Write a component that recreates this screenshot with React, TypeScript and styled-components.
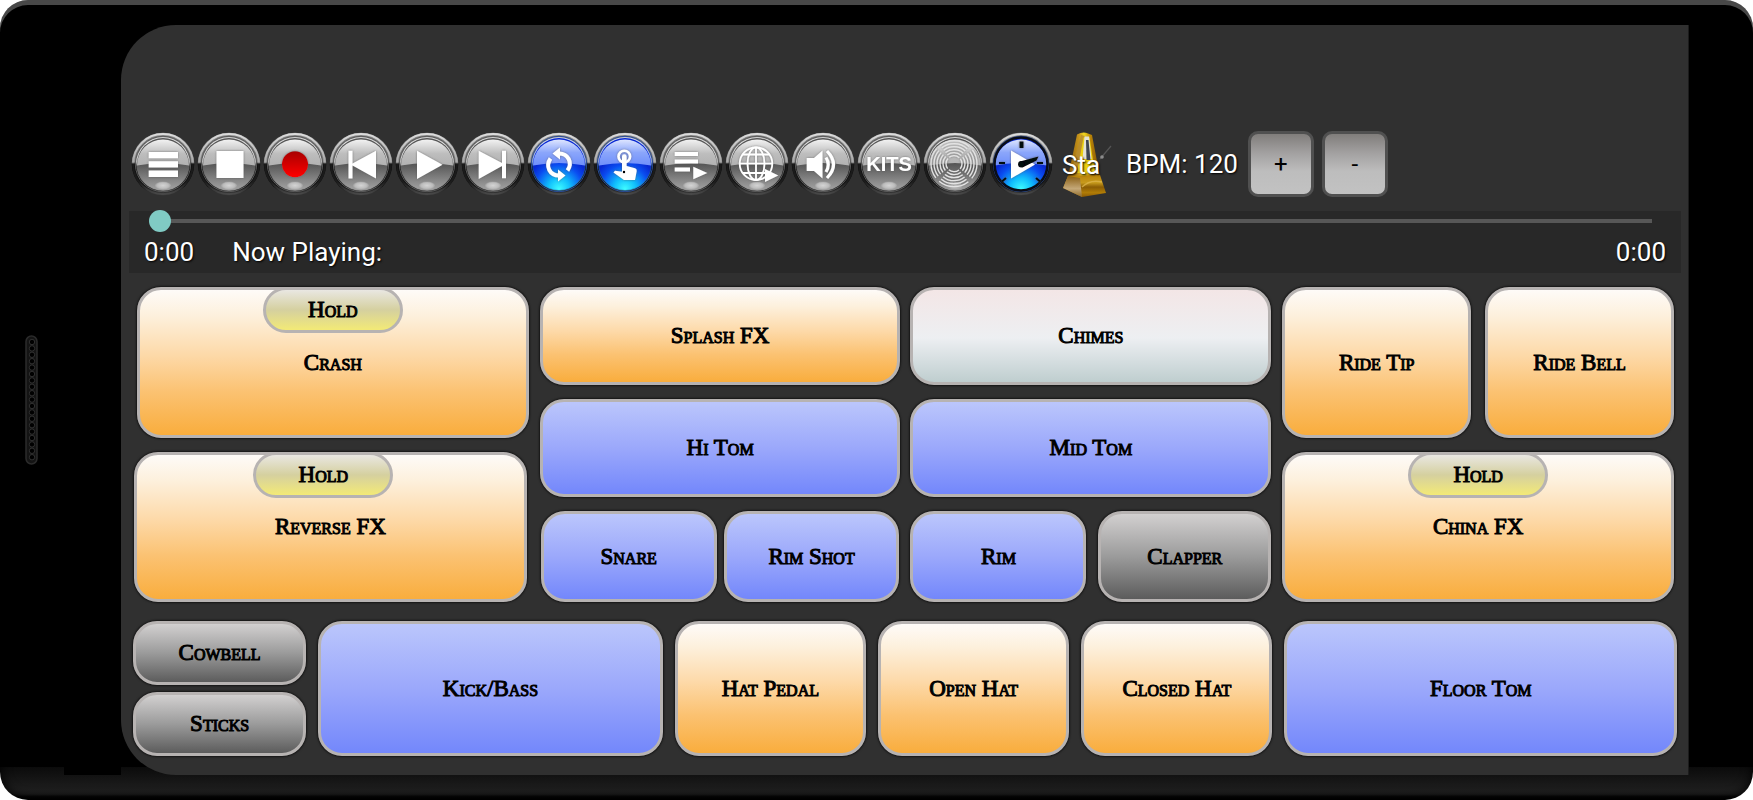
import React from "react";
import styled, { createGlobalStyle, css } from "styled-components";

const GlobalStyle = createGlobalStyle`
  *, *::before, *::after { box-sizing: border-box; }
  body { margin: 0; background: #fff; font-family: Roboto, sans-serif; }
  button { font: inherit; color: inherit; padding: 0; border: 0; background: none; cursor: pointer; }
`;

/* ---------- device frame ---------- */

const Device = styled.div`
  display: flex;
  min-height: 100vh;
  padding: 25px 0;
  border-radius: 28px;
  overflow: hidden;
  background:
    linear-gradient(#000, #000) 64px calc(100% - 25px) / 57px 8px no-repeat,
    linear-gradient(#0b0b0b, #1e1e1e 70%, #1b1b1b 82%, #060606 90%, #000) 0 100% / 100% 33px no-repeat,
    #000;
  box-shadow: inset 0 5px 0 #484848, inset 0 0 12px #000;
`;

const Bezel = styled.div<{ $width: number }>`
  flex: none;
  width: ${(p) => p.$width}px;
  display: flex;
  align-items: center;
  padding-left: 25px;
`;

const Screen = styled.main`
  flex: 1;
  min-width: 0;
  display: flex;
  flex-direction: column;
  gap: 14px;
  padding: 105px 0 18px;
  background: #303030;
  border-right: 1px solid #1c1c1c;
  border-radius: 55px 0 0 55px;
`;

/* ---------- toolbar ---------- */

const Toolbar = styled.div`
  display: flex;
  align-items: center;
  gap: 2px;
  height: 67px;
  padding-left: 10px;
`;

const OrbButton = styled.button`
  flex: none;
  width: 64px;
  height: 64px;
  border-radius: 50%;
  svg { display: block; }
`;

const MetronomeButton = styled.button`
  position: relative;
  flex: none;
  width: 64px;
  height: 66px;
  svg { display: block; }
`;

const label = css`
  font-size: 26px;
  line-height: 30px;
  color: #fff;
  text-shadow: 1px 1px 2px #000;
  white-space: nowrap;
`;

const MetronomeLabel = styled.span`
  ${label}
  position: absolute;
  left: 7px;
  top: 19px;
`;

const Bpm = styled.output`
  ${label}
  margin: 0 8px 0 5px;
`;

const StepButton = styled.button`
  flex: none;
  width: 66px;
  height: 66px;
  margin-right: 6px;
  border: 3px solid #505050;
  border-radius: 10px;
  background: linear-gradient(#807d7b, #a3a1a1 32%, #bdbdbd 62%, #c2c2c2);
  color: #000;
  font-size: 24px;
  line-height: 30px;
`;

/* ---------- player ---------- */

const Player = styled.section`
  margin: 0 7px 0 8px;
  padding-bottom: 6px;
  background: #282828;
`;

const Seek = styled.input`
  display: block;
  width: calc(100% - 38px);
  height: 20px;
  margin: 0 18px 6px 20px;
  appearance: none;
  background: linear-gradient(#575757, #575757) center / calc(100% - 22px) 4px no-repeat;
  &::-webkit-slider-thumb {
    appearance: none;
    width: 22px;
    height: 22px;
    border-radius: 50%;
    background: #80cbc4;
  }
`;

const TrackInfo = styled.div`
  display: flex;
  padding: 0 15px 0 15px;
`;

const Time = styled.span`
  ${label}
`;

const NowPlaying = styled.span`
  ${label}
  flex: 1;
  padding-left: 38px;
`;

/* ---------- pads ---------- */

type Tone = "cymbal" | "drum" | "metal" | "chimes";

const tones: Record<Tone, string> = {
  cymbal: "linear-gradient(#fefbf8, #fdf0dc 18%, #fdd9a8 45%, #fbc272 70%, #f9ad3d)",
  drum: "linear-gradient(#bbc6fc, #9ba8fb 50%, #7387fb)",
  metal: "linear-gradient(#d2d0d0, #9b9b9b 50%, #5c5c5c)",
  chimes: "linear-gradient(#f3e6e6, #edeff2 52%, #bfcecf)",
};

const PadCell = styled.div<{ $height: number; $start?: number; $end?: number }>`
  position: relative;
  display: flex;
  justify-content: center;
  min-width: 0;
  height: ${(p) => p.$height}px;
  margin-left: ${(p) => p.$start ?? 0}px;
  margin-right: ${(p) => p.$end ?? 0}px;
`;

const padFont = css`
  font-family: "Liberation Serif", serif;
  font-size: 23px;
  line-height: 28px;
  font-weight: 400;
  -webkit-text-stroke: 1px #000;
  font-variant-caps: small-caps;
  color: #000;
  white-space: nowrap;
`;

const PadButton = styled.button<{ $tone: Tone }>`
  && {
    ${padFont}
    flex: 1;
    min-width: 0;
    border: 3px solid #b7b3b2;
    border-radius: 24px;
    background: ${(p) => tones[p.$tone]};
    box-shadow: 0 0 2px 1px rgba(0, 0, 0, 0.6);
  }
`;

const HoldButton = styled.button<{ $shift: number }>`
  && {
    ${padFont}
    position: absolute;
    top: 0;
    left: calc(50% - 70px - ${(p) => p.$shift}px);
    width: 140px;
    height: 46px;
    border: 3px solid #b7b3b2;
    border-radius: 23px;
    background: linear-gradient(#e9e7e2, #d5d09f 50%, #f3ea76);
  }
`;

const UpperKit = styled.div`
  display: grid;
  grid-template-columns: 395fr 732fr 392fr;
  gap: 11px;
  padding: 0 14px 0 13px;
`;

const Stack = styled.div<{ $gap: number }>`
  display: flex;
  flex-direction: column;
  gap: ${(p) => p.$gap}px;
  min-width: 0;
`;

const Split = styled.div<{ $columns: string; $gap: number; $inset?: number }>`
  display: grid;
  grid-template-columns: ${(p) => p.$columns};
  gap: ${(p) => p.$gap}px;
  padding: 0 ${(p) => p.$inset ?? 0}px;
`;

const LowerKit = styled.div`
  display: grid;
  grid-template-columns: 173fr 344fr 191fr 191fr 191fr 392fr;
  gap: 12px;
  margin-top: 5px;
  padding: 0 11px 0 12px;
`;

type PadProps = {
  name: string;
  tone: Tone;
  height: number;
  hold?: boolean;
  holdShift?: number;
  start?: number;
  end?: number;
};

const Pad = ({ name, tone, height, hold, holdShift = 0, start, end }: PadProps) => (
  <PadCell $height={height} $start={start} $end={end}>
    <PadButton type="button" $tone={tone}>{name}</PadButton>
    {hold && <HoldButton type="button" $shift={holdShift}>Hold</HoldButton>}
  </PadCell>
);

/* ---------- drawings ---------- */

const Defs = () => (
  <svg width="0" height="0" style={{ position: "absolute" }} aria-hidden="true">
    <defs>
      <linearGradient id="rim" x1="0" y1="0" x2="0" y2="1">
        <stop offset="0" stopColor="#8c8c8c" />
        <stop offset="0.3" stopColor="#7a7a7a" />
        <stop offset="0.47" stopColor="#8a8a8a" />
        <stop offset="0.5" stopColor="#0c0c0c" />
        <stop offset="0.85" stopColor="#141414" />
        <stop offset="1" stopColor="#3c3c3c" />
      </linearGradient>
      <linearGradient id="rimLine" x1="0" y1="0" x2="0" y2="1">
        <stop offset="0" stopColor="#dcdcdc" />
        <stop offset="0.47" stopColor="#a8a8a8" />
        <stop offset="0.5" stopColor="#1a1a1a" />
        <stop offset="0.8" stopColor="#1c1c1c" />
        <stop offset="1" stopColor="#484848" />
      </linearGradient>
      <linearGradient id="innerLine" x1="0" y1="0" x2="0" y2="1">
        <stop offset="0" stopColor="#e8e8e8" />
        <stop offset="0.45" stopColor="#dadada" />
        <stop offset="0.55" stopColor="#5c5c5c" />
        <stop offset="1" stopColor="#9a9a9a" />
      </linearGradient>
      <linearGradient id="innerBlue" x1="0" y1="0" x2="0" y2="1">
        <stop offset="0" stopColor="#dbe4ff" />
        <stop offset="0.45" stopColor="#8fb0ff" />
        <stop offset="0.55" stopColor="#123f9c" />
        <stop offset="1" stopColor="#2c8fc4" />
      </linearGradient>
      <linearGradient id="greyTop" x1="0" y1="0" x2="0" y2="1">
        <stop offset="0" stopColor="#f2f2f2" />
        <stop offset="0.55" stopColor="#bdbdbd" />
        <stop offset="1" stopColor="#b2b2b2" />
      </linearGradient>
      <linearGradient id="greyLow" x1="0" y1="0" x2="0" y2="1">
        <stop offset="0.5" stopColor="#565656" />
        <stop offset="0.8" stopColor="#858585" />
        <stop offset="1" stopColor="#a2a2a2" />
      </linearGradient>
      <linearGradient id="blueTop" x1="0" y1="0" x2="0" y2="1">
        <stop offset="0" stopColor="#dfe6ff" />
        <stop offset="0.5" stopColor="#8ba6fb" />
        <stop offset="1" stopColor="#6f8ffb" />
      </linearGradient>
      <radialGradient id="blueLow" cx="0.5" cy="0.98" r="0.62">
        <stop offset="0" stopColor="#3ffcff" />
        <stop offset="0.35" stopColor="#10bdfc" />
        <stop offset="0.75" stopColor="#0a4cf0" />
        <stop offset="1" stopColor="#0727d0" />
      </radialGradient>
      <linearGradient id="recordDot" x1="0" y1="0" x2="0" y2="1">
        <stop offset="0" stopColor="#a80000" />
        <stop offset="1" stopColor="#ff0000" />
      </linearGradient>
      <radialGradient id="gloss">
        <stop offset="0" stopColor="#d4d4d4" />
        <stop offset="0.7" stopColor="#bdbdbd" />
        <stop offset="1" stopColor="#bdbdbd" stopOpacity="0.3" />
      </radialGradient>
      <linearGradient id="gold" x1="0" y1="0" x2="1" y2="0">
        <stop offset="0" stopColor="#8a5a08" />
        <stop offset="0.35" stopColor="#c9961c" />
        <stop offset="0.5" stopColor="#f0d820" />
        <stop offset="0.7" stopColor="#b98408" />
        <stop offset="1" stopColor="#7c4f04" />
      </linearGradient>
      <linearGradient id="goldBase" x1="0" y1="0" x2="0" y2="1">
        <stop offset="0" stopColor="#b98208" />
        <stop offset="0.35" stopColor="#c79a1c" />
        <stop offset="0.55" stopColor="#8a5c04" />
        <stop offset="0.8" stopColor="#b07c06" />
        <stop offset="1" stopColor="#8c5a04" />
      </linearGradient>
      <linearGradient id="goldSide" x1="0" y1="0" x2="0" y2="1">
        <stop offset="0" stopColor="#8a5f14" />
        <stop offset="0.6" stopColor="#c4a878" />
        <stop offset="1" stopColor="#8f6a2a" />
      </linearGradient>
      <filter id="glyphShadow" x="-20%" y="-20%" width="140%" height="140%">
        <feDropShadow dx="0" dy="0" stdDeviation="1" floodColor="#555" floodOpacity="0.7" />
      </filter>
    </defs>
  </svg>
);

const Orb = ({ blue, dial, children }: { blue?: boolean; dial?: boolean; children: React.ReactNode }) => (
  <svg width="64" height="64" viewBox="0 0 64 64" aria-hidden="true">
    <circle cx="32" cy="32" r="31.3" fill="url(#rim)" />
    <circle cx="32" cy="32" r="29.9" fill="none" stroke="url(#rimLine)" strokeWidth="2" />
    <circle cx="32" cy="32" r="27.7" fill="none" stroke={blue ? "#2a4c94" : "#5a5a5a"} strokeWidth="1" />
    <circle cx="32" cy="32" r="26.8" fill={blue ? "url(#innerBlue)" : "url(#innerLine)"} />
    <circle cx="32" cy="32" r="26" fill={blue ? "url(#blueLow)" : "url(#greyLow)"} />
    <path d="M6 33.500a26 26 0 0 1 52 0Q32 28.500 6 33.500z" fill={blue ? "url(#blueTop)" : "url(#greyTop)"} />
    {!blue && <ellipse cx="32" cy="53.500" rx="8" ry="4" fill="url(#gloss)" />}
    {dial && <circle cx="32" cy="32" r="26.500" fill="none" stroke="#0a0d16" strokeWidth="2.500" />}
    <g fill="#fff" filter="url(#glyphShadow)">{children}</g>
  </svg>
);

const controls: { name: string; blue?: boolean; dial?: boolean; glyph: React.ReactNode }[] = [
  { name: "Menu", glyph: <path d="M17.700 20h29.300v6.300H17.700zM17.700 29.300h29.300v6.300H17.700zM17.700 38.600h29.300v6.300H17.700z" /> },
  { name: "Stop", glyph: <path d="M19.500 19h27v27h-27z" /> },
  { name: "Record", glyph: <circle cx="32" cy="32.300" r="13" fill="url(#recordDot)" /> },
  { name: "Previous", glyph: <path d="M19.500 18.700h4v12.800L47 18.700V46.500L23.500 33.500V46.500h-4z" /> },
  { name: "Play", glyph: <path d="M22 18.700 47.500 32.700 22 47z" /> },
  { name: "Next", glyph: <path d="M17.700 18.700 41 31V18.700h4V46.300h-4V34L17.700 47z" /> },
  {
    name: "Loop",
    blue: true,
    glyph: (
      <g>
        <path d="M32 21.500c9 0 14 9 8.500 17M32 43.500c-9 0-14-9-8.500-17" fill="none" stroke="#fff" strokeWidth="4" />
        <path d="M33 15.500v12L25.500 21.500zM31 37.500v12L38.500 43.500z" />
      </g>
    ),
  },
  {
    name: "Touch",
    blue: true,
    glyph: (
      <g>
        <circle cx="31.300" cy="24.500" r="5.800" fill="none" stroke="#fff" strokeWidth="2.600" />
        <path d="M29 24.500a2.300 2.300 0 0 1 4.600 0V34l8.400 2.200q2 .6 1.700 2.800L42 48H31L20.500 40.500l1.500-1.700 7 1z" />
        <circle cx="31" cy="40" r="1.200" fill="#000" />
      </g>
    ),
  },
  { name: "Playlist", glyph: <path d="M15.700 20h23.300v4H15.700zM15.700 27.500h23.300v4H15.700zM15.700 35.500h15.300v4H15.700zM34.300 34.700 48.300 41 34.300 47.300z" /> },
  {
    name: "Online",
    glyph: (
      <g>
        <g fill="none" stroke="#fff" strokeWidth="1.800">
          <circle cx="31" cy="31.700" r="16.300" />
          <ellipse cx="31" cy="31.700" rx="8.500" ry="16.300" />
          <path d="M31 15v33M14.500 31.700h33M17.500 22.500h27M17.500 41h27" />
        </g>
        <path d="M40 37 53.300 43.500 40 50z" />
      </g>
    ),
  },
  {
    name: "Volume",
    glyph: (
      <g>
        <path d="M15.700 26h7.300L31.500 18.500v28L23 39h-7.300z" />
        <path d="M35 25.500q4.500 7 0 14.500M36 19q13 13.500 0 27" fill="none" stroke="#fff" strokeWidth="3.200" />
      </g>
    ),
  },
  {
    name: "Kits",
    glyph: (
      <text x="32" y="39" textAnchor="middle" fontFamily="Liberation Sans, sans-serif" fontWeight="700" fontSize="20">
        KITS
      </text>
    ),
  },
  {
    name: "Vibrate",
    glyph: (
      <g fill="none" stroke="#e4e4e4" strokeWidth="1.300">
        {[8, 11, 14, 17, 20, 23].map((r) => (
          <circle key={r} cx="31" cy="31.700" r={r} strokeDasharray={`${r * 1.37} ${r * 0.2}`} strokeDashoffset={r * 0.68} />
        ))}
      </g>
    ),
  },
  {
    name: "Tempo",
    blue: true,
    dial: true,
    glyph: (
      <g>
        <path d="M22 18.500 46 32.500 22 46.500z" />
        <path d="M32.500 9.500v6.500" stroke="#05070d" strokeWidth="4" />
        <path d="M10 31h6M48 31h6M51 49.500l-4-3.500M13 49.500l4-3.500" stroke="#05070d" strokeWidth="2.200" />
        <path d="M31 29.500 49.500 24.500 47.500 28.500 33.500 35.500z" fill="#05070d" />
        <circle cx="32.300" cy="32.300" r="3.200" fill="#05070d" />
      </g>
    ),
  },
];

const Metronome = () => (
  <svg width="64" height="66" viewBox="0 0 64 66" aria-hidden="true">
    <path d="M22 3.500Q28 0 33 2.500L37 4 45 46H13z" fill="url(#gold)" />
    <path d="M26 4 30 5 22 42l-6 1z" fill="#b58a30" opacity="0.8" />
    <path d="M28.500 6.500h6L40 42H22z" fill="#ecd010" />
    <path d="M29.500 5.500h4.500L36.500 28h-9z" fill="#e4e2d4" />
    <path d="M31 9h2.500l2 20h-4z" fill="#3d4450" />
    <path d="M13 45 45 44 51 62 27 66 8 57z" fill="url(#goldBase)" />
    <path d="M13 45 25 47 27 66 8 57z" fill="url(#goldSide)" />
    <path d="M27 56q8-8 20-5" stroke="#dcb44a" strokeWidth="1.500" fill="none" opacity="0.8" />
    <path d="M45 28 56 15" stroke="#555" strokeWidth="1.200" />
    <circle cx="47" cy="26" r="1.800" fill="#8c8c8c" />
  </svg>
);

const Grille = () => (
  <svg width="13" height="130" viewBox="0 0 13 130" aria-hidden="true">
    <rect x="1" y="1" width="11" height="128" rx="5.500" fill="#141414" stroke="#2b2b2b" strokeWidth="1.500" />
    {Array.from({ length: 19 }, (_, i) => (
      <circle key={i} cx="7" cy={7 + i * 6.4} r="2.700" fill="#000" stroke="#3a3a3a" strokeWidth="0.800" />
    ))}
  </svg>
);

export default function App() {
  return (
    <>
      <GlobalStyle />
      <Defs />
      <Device>
        <Bezel $width={121}>
          <Grille />
        </Bezel>
        <Screen>
          <Toolbar role="toolbar">
            {controls.map((c) => (
              <OrbButton key={c.name} type="button" aria-label={c.name}>
                <Orb blue={c.blue} dial={c.dial}>{c.glyph}</Orb>
              </OrbButton>
            ))}
            <MetronomeButton type="button">
              <Metronome />
              <MetronomeLabel>Sta</MetronomeLabel>
            </MetronomeButton>
            <Bpm>BPM: 120</Bpm>
            <StepButton type="button">+</StepButton>
            <StepButton type="button">-</StepButton>
          </Toolbar>

          <Player>
            <Seek type="range" min={0} max={100} defaultValue={0} aria-label="Position" />
            <TrackInfo>
              <Time>0:00</Time>
              <NowPlaying>Now Playing:</NowPlaying>
              <Time>0:00</Time>
            </TrackInfo>
          </Player>

          <UpperKit>
            <Stack $gap={14}>
              <Pad name="Crash" tone="cymbal" height={151} hold start={3} />
              <Pad name="Reverse FX" tone="cymbal" height={150} hold holdShift={7} end={2} />
            </Stack>
            <Stack $gap={14}>
              <Split $columns="1fr 1fr" $gap={10}>
                <Pad name="Splash FX" tone="cymbal" height={98} />
                <Pad name="Chimes" tone="chimes" height={98} />
              </Split>
              <Split $columns="1fr 1fr" $gap={10}>
                <Pad name="Hi Tom" tone="drum" height={98} />
                <Pad name="Mid Tom" tone="drum" height={98} />
              </Split>
              <Split $columns="1fr 1fr" $gap={10}>
                <Split $columns="1fr 1fr" $gap={7} $inset={1}>
                  <Pad name="Snare" tone="drum" height={91} />
                  <Pad name="Rim Shot" tone="drum" height={91} />
                </Split>
                <Split $columns="176fr 173fr" $gap={12}>
                  <Pad name="Rim" tone="drum" height={91} />
                  <Pad name="Clapper" tone="metal" height={91} />
                </Split>
              </Split>
            </Stack>
            <Stack $gap={14}>
              <Split $columns="1fr 1fr" $gap={14}>
                <Pad name="Ride Tip" tone="cymbal" height={151} />
                <Pad name="Ride Bell" tone="cymbal" height={151} />
              </Split>
              <Pad name="China FX" tone="cymbal" height={150} hold />
            </Stack>
          </UpperKit>

          <LowerKit>
            <Stack $gap={7}>
              <Pad name="Cowbell" tone="metal" height={64} />
              <Pad name="Sticks" tone="metal" height={64} />
            </Stack>
            <Pad name="Kick/Bass" tone="drum" height={135} />
            <Pad name="Hat Pedal" tone="cymbal" height={135} />
            <Pad name="Open Hat" tone="cymbal" height={135} />
            <Pad name="Closed Hat" tone="cymbal" height={135} />
            <Pad name="Floor Tom" tone="drum" height={135} />
          </LowerKit>
        </Screen>
        <Bezel $width={64} />
      </Device>
    </>
  );
}
